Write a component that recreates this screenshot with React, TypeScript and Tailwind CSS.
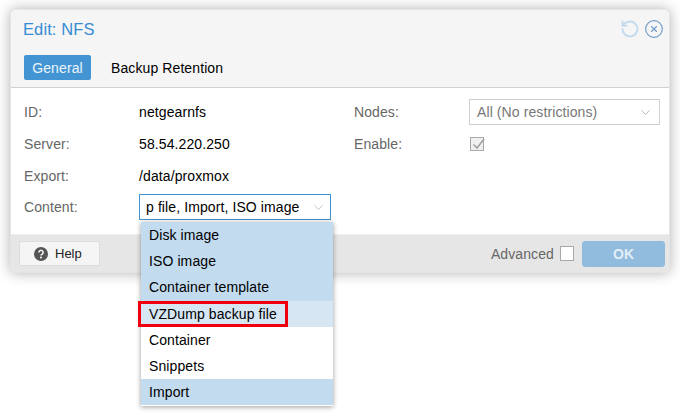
import { ChevronDown, CircleX, RotateCcw } from 'lucide-react'

const options = [
  { label: 'Disk image', bg: 'bg-[#c2dbef]' },
  { label: 'ISO image', bg: 'bg-[#c2dbef]' },
  { label: 'Container template', bg: 'bg-[#c2dbef]' },
  { label: 'VZDump backup file', bg: 'bg-[#d6e6f3]' },
  { label: 'Container', bg: 'bg-white' },
  { label: 'Snippets', bg: 'bg-white' },
  { label: 'Import', bg: 'bg-[#c2dbef]' },
]

function FormRow({ label, children }: { label: string; children: React.ReactNode }) {
  return (
    <div className="flex items-center h-[26px]">
      <div className="w-[115px] shrink-0 text-[#666]">{label}</div>
      {children}
    </div>
  )
}

export default function App() {
  return (
    <div className="relative w-[680px] h-[416px] overflow-hidden bg-white text-[14px] leading-[18px] tracking-[0.1px] text-black font-['Liberation_Sans',Arial,sans-serif] pt-[9px] pl-[10px]">
      <div className="flex flex-col w-[660px] h-[264px] rounded-[5px] border border-[#e4e4e4] bg-[#f5f5f5] shadow-[0_0_14px_rgba(0,0,0,0.3)] overflow-hidden">
        {/* Title */}
        <div className="flex items-center justify-between h-[36px] pt-[1px] pl-[12px] pr-[5px]">
          <span className="text-[16.5px] text-[#358cd4]">Edit: NFS</span>
          <div className="flex items-center gap-[4px]">
            <RotateCcw size={20} strokeWidth={2.4} className="text-[#c4dbef]" />
            <CircleX size={20} strokeWidth={1.4} className="text-[#6f9fc8]" />
          </div>
        </div>

        {/* Tabs */}
        <div className="flex items-start h-[42px] pt-[9px] pl-[13px] border-b border-[#d0d0d0]">
          <div className="flex items-center justify-center w-[67px] h-[25px] rounded-[2px] bg-[#4394d3] text-white/90">General</div>
          <div className="flex items-center h-[25px] pl-[20px]">Backup Retention</div>
        </div>

        {/* Form */}
        <div className="flex h-[146px] pt-[11px] pl-[13px] bg-white">
          <div className="flex flex-col gap-[6px] w-[330px]">
            <FormRow label="ID:">netgearnfs</FormRow>
            <FormRow label="Server:">58.54.220.250</FormRow>
            <FormRow label="Export:">/data/proxmox</FormRow>
            <div className="-mt-px">
              <FormRow label="Content:">
                <div className="flex items-center justify-between w-[192px] h-[26px] pl-[6px] pr-[4px] border border-[#3f92d2] whitespace-nowrap">
                  <span>p file, Import, ISO image</span>
                  <ChevronDown size={15} strokeWidth={1.5} className="text-[#c0c0c0]" />
                </div>
              </FormRow>
            </div>
          </div>
          <div className="flex flex-col gap-[6px]">
            <FormRow label="Nodes:">
              <div className="flex items-center justify-between w-[191px] h-[26px] pl-[7px] pr-[6px] border border-[#cfcfcf] text-[#777] whitespace-nowrap">
                <span>All (No restrictions)</span>
                <ChevronDown size={15} strokeWidth={1.5} className="text-[#b5b5b5]" />
              </div>
            </FormRow>
            <FormRow label="Enable:">
              <div className="w-[14px] h-[14px] ml-px bg-[#f0f0f0] border border-[#a8a8a8]">
                <svg width="14" height="14" viewBox="0 0 14 14" fill="none" className="overflow-visible">
                  <polyline points="2.5,6.5 6,10 13,1" stroke="#a0a0a0" strokeWidth="1.5" />
                </svg>
              </div>
            </FormRow>
          </div>
        </div>

        {/* Footer */}
        <div className="flex items-center justify-between flex-1 pl-[8px] pr-[4px] bg-[#e6e6e6] border-t border-[#eee]">
          <div className="flex items-center gap-[7px] w-[81px] h-[25px] pl-[14px] rounded-[2px] border border-[#ddd] bg-[#f5f5f5] text-[#222]">
            <svg width="14" height="14" viewBox="0 0 14 14" fill="none" className="shrink-0">
              <circle cx="7" cy="7" r="7" fill="#555" />
              <path d="M4.9 5.4a2.1 2.1 0 1 1 3.2 1.8c-.7.4-1.1.8-1.1 1.4" stroke="#f5f5f5" strokeWidth="1.6" />
              <rect x="6.1" y="9.6" width="1.8" height="1.8" fill="#f5f5f5" />
            </svg>
            <span className="text-[13px] tracking-normal">Help</span>
          </div>
          <div className="flex items-center">
            <span className="text-[#666]">Advanced</span>
            <div className="w-[14px] h-[15px] ml-[6px] bg-white border border-[#a8a8a8]"></div>
            <div className="flex items-center justify-center w-[83px] h-[26px] ml-[8px] rounded-[3px] bg-[#92bcdd] border border-[#8fbadc] text-[#e3eef7] font-bold">OK</div>
          </div>
        </div>
      </div>

      {/* Content dropdown */}
      <div className="absolute left-[141px] top-[222px] w-[192px] h-[184px] flex flex-col bg-white shadow-[0_1px_5px_rgba(0,0,0,0.4)]">
        {options.map((o) => (
          <div key={o.label} className={`flex items-center h-[26.2px] pl-[8px] ${o.bg}`}>
            {o.label}
          </div>
        ))}
        <div className="absolute left-[-3px] top-[79px] w-[150px] h-[26px] border-[3px] border-[#f0000f]"></div>
      </div>
    </div>
  )
}
